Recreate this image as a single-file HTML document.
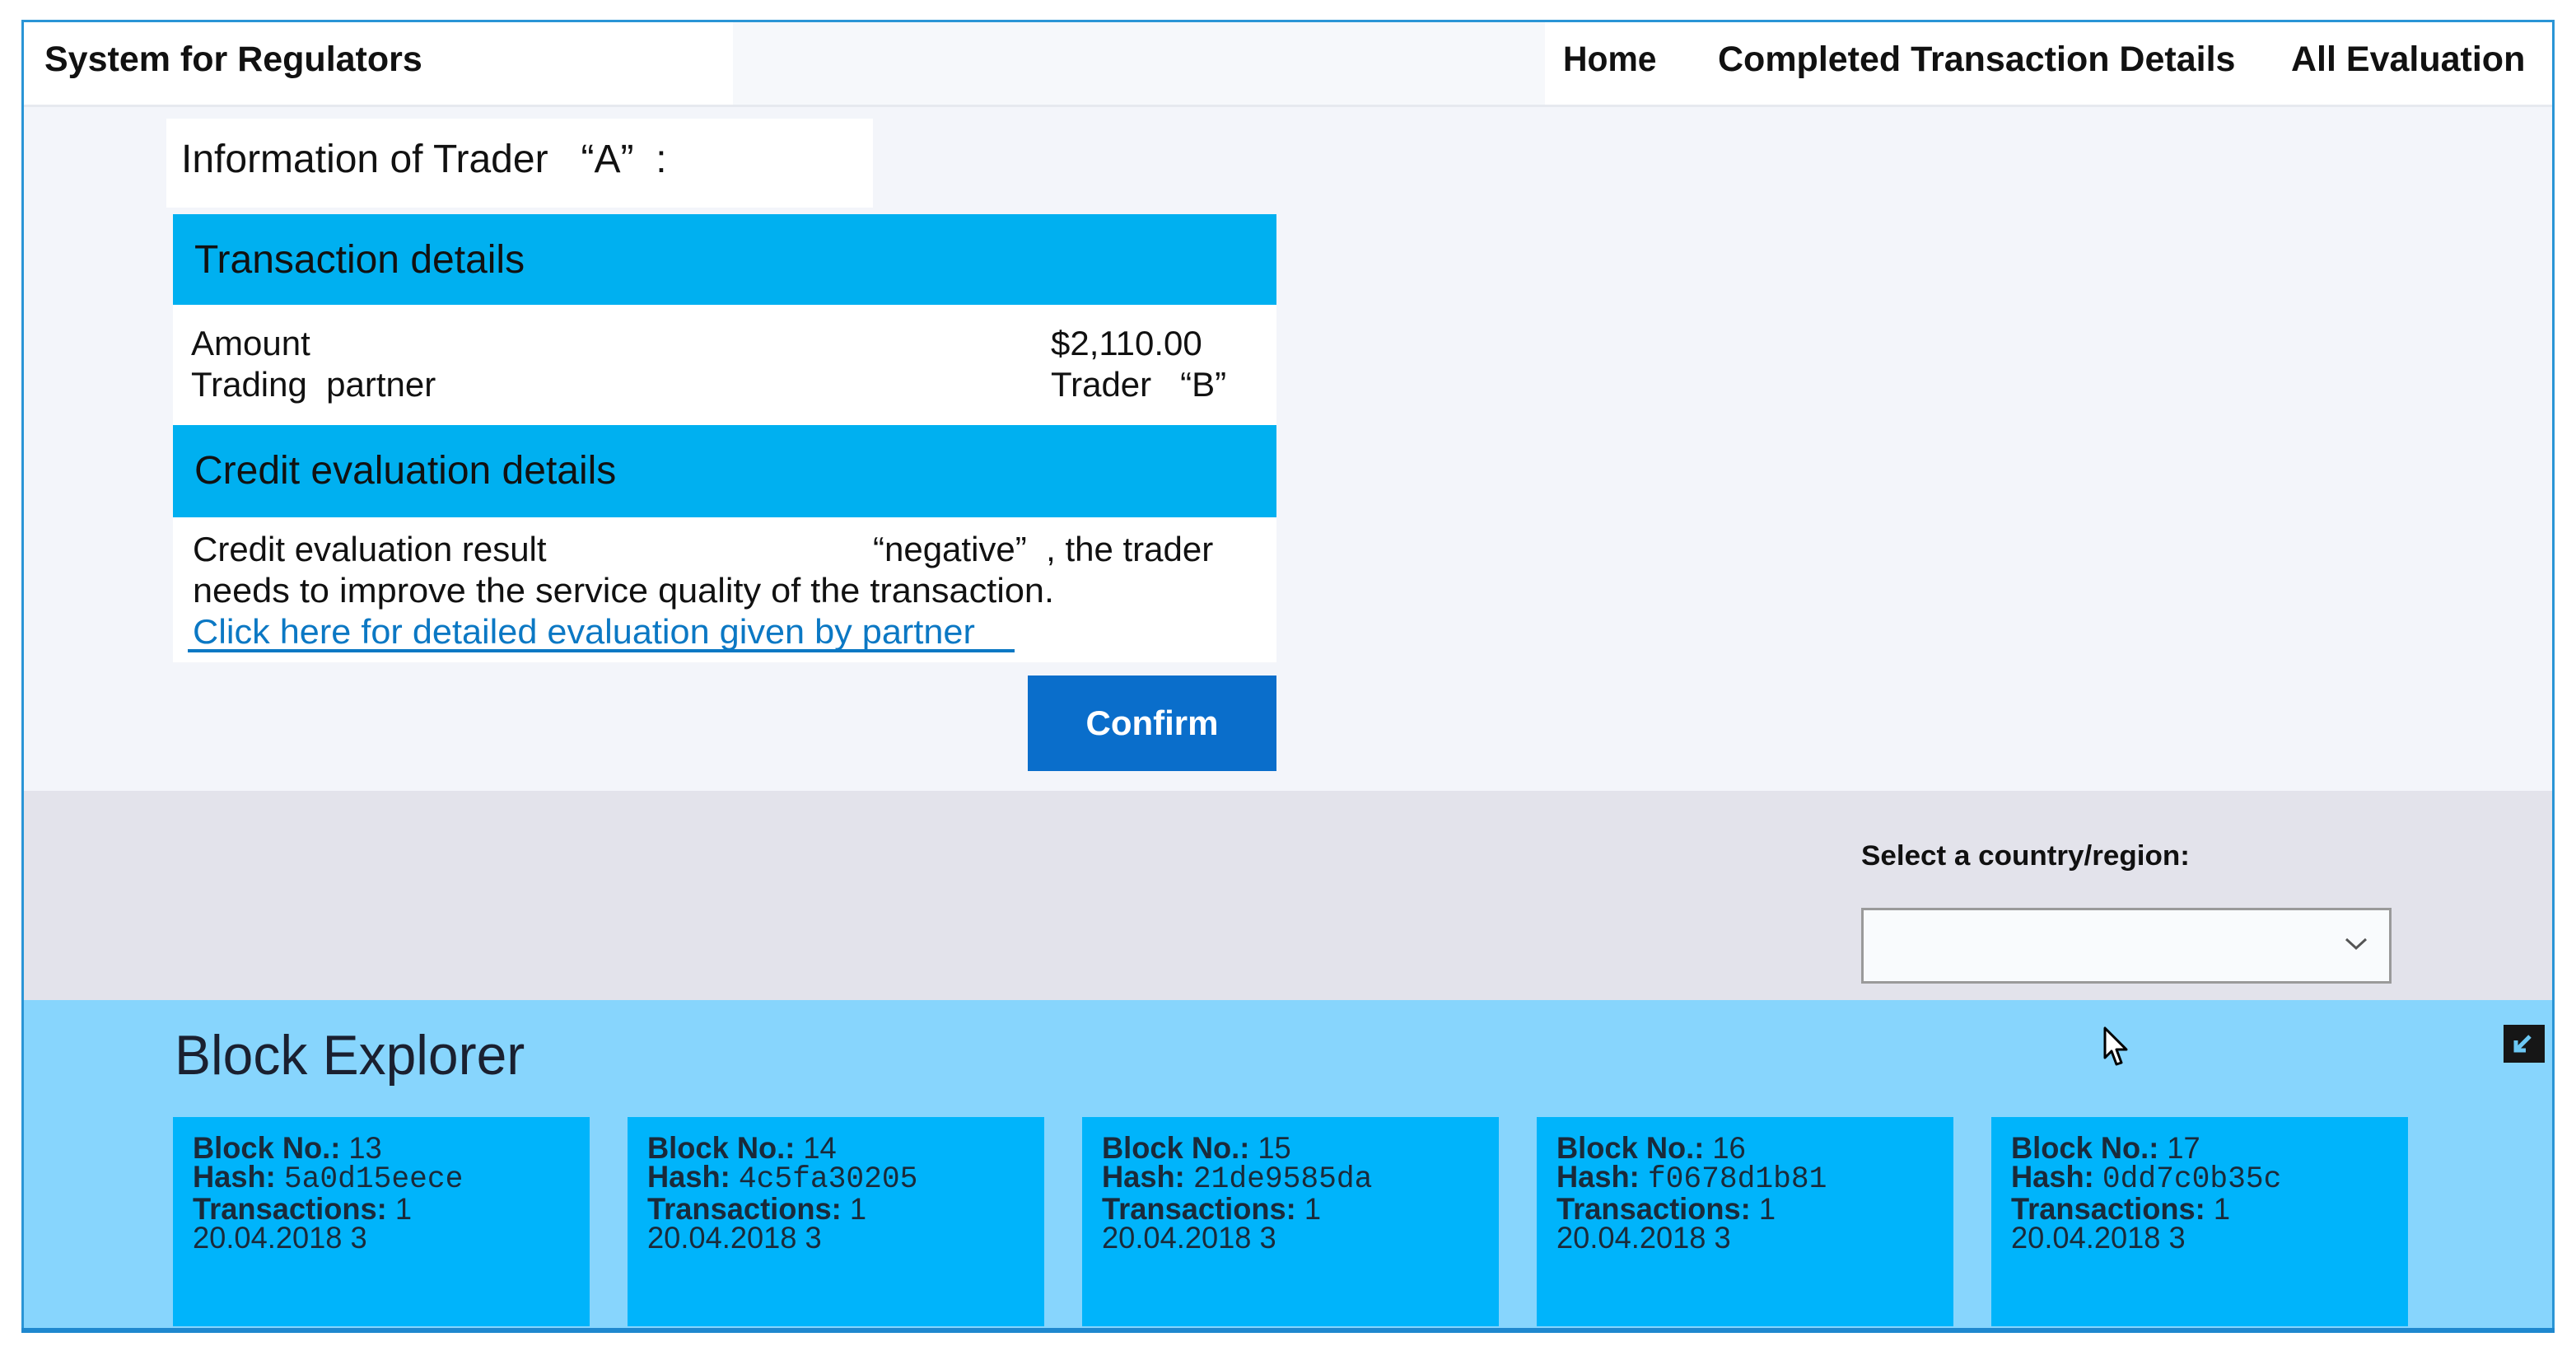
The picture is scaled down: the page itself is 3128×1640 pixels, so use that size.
<!DOCTYPE html>
<html><head><meta charset="utf-8"><style>
*{margin:0;padding:0;box-sizing:border-box}
body{width:3128px;height:1640px;background:#fff;position:relative;overflow:hidden;font-family:"Liberation Sans",sans-serif;color:#111}
.a{position:absolute}
.s{display:inline-block;transform-origin:0 0;white-space:nowrap}
.b{font-weight:bold}
.card{position:absolute;top:1356px;width:506px;height:254px;background:#00b4fb}
.card .t{position:absolute;left:24px;top:20px;font-size:37px;line-height:35px;color:#1a2a3a;transform:scaleX(.98);transform-origin:0 0;white-space:nowrap}
.mono{font-family:"Liberation Mono",monospace;font-weight:normal}
</style></head><body>
<div class="a" style="left:26px;top:24px;width:3076px;height:1594px;border:3px solid #2a95d6;background:#f3f5fa"></div>
<!-- header -->
<div class="a" style="left:29px;top:27px;width:3070px;height:101px;background:#fff"></div>
<div class="a" style="left:890px;top:27px;width:986px;height:101px;background:#f6f8fb"></div>
<div class="a" style="left:29px;top:127px;width:3070px;height:3px;background:#e6e9ef"></div>
<div class="a b" style="left:54px;top:48px;font-size:43px"><span class="s">System for Regulators</span></div>
<div class="a b" style="left:1898px;top:48px;font-size:43px"><span class="s" style="transform:scaleX(.95)">Home</span></div>
<div class="a b" style="left:2086px;top:48px;font-size:43px"><span class="s">Completed Transaction Details</span></div>
<div class="a b" style="left:2782px;top:48px;font-size:43px"><span class="s">All Evaluation</span></div>
<!-- info -->
<div class="a" style="left:202px;top:144px;width:858px;height:108px;background:#fff"></div>
<div class="a" style="left:220px;top:166px;font-size:48px"><span class="s">Information of Trader &nbsp;&nbsp;“A” &nbsp;:</span></div>
<div class="a" style="left:210px;top:260px;width:1340px;height:110px;background:#00b0f0"></div>
<div class="a" style="left:236px;top:288px;font-size:48px"><span class="s">Transaction details</span></div>
<div class="a" style="left:210px;top:370px;width:1340px;height:146px;background:#fff"></div>
<div class="a" style="left:232px;top:392px;font-size:42px;line-height:50px"><span class="s">Amount<br>Trading &nbsp;partner</span></div>
<div class="a" style="left:1276px;top:392px;font-size:42px;line-height:50px"><span class="s">$2,110.00<br>Trader &nbsp;&nbsp;“B”</span></div>
<div class="a" style="left:210px;top:516px;width:1340px;height:112px;background:#00b0f0"></div>
<div class="a" style="left:236px;top:544px;font-size:48px"><span class="s">Credit evaluation details</span></div>
<div class="a" style="left:210px;top:628px;width:1340px;height:176px;background:#fff"></div>
<div class="a" style="left:234px;top:642px;font-size:42px;line-height:50px"><span class="s">Credit evaluation result</span></div>
<div class="a" style="left:1060px;top:642px;font-size:42px;line-height:50px"><span class="s">“negative” &nbsp;, the trader</span></div>
<div class="a" style="left:234px;top:692px;font-size:42px;line-height:50px"><span class="s" style="transform:scaleX(1.03)">needs to improve the service quality of the transaction.</span></div>
<div class="a" style="left:234px;top:742px;font-size:42px;line-height:50px;color:#0b78c4"><span class="s" style="transform:scaleX(1.03)">Click here for detailed evaluation given by partner</span></div>
<div class="a" style="left:228px;top:788px;width:1004px;height:4px;background:#0b78c4"></div>
<div class="a b" style="left:1248px;top:820px;width:302px;height:116px;background:#0a6ecb;color:#fff;font-size:42px;line-height:116px;text-align:center"><span class="s" style="transform-origin:50% 0">Confirm</span></div>
<!-- gray band -->
<div class="a" style="left:29px;top:960px;width:3070px;height:254px;background:#e3e3eb"></div>
<div class="a b" style="left:2260px;top:1020px;font-size:34px"><span class="s" style="transform:scaleX(1.03)">Select a country/region:</span></div>
<div class="a" style="left:2260px;top:1102px;width:644px;height:92px;background:#f9fbfd;border:3px solid #9a9a9a"></div>
<svg class="a" style="left:2846px;top:1136px" width="30" height="20" viewBox="0 0 30 20"><path d="M3 4 L15 15 L27 4" fill="none" stroke="#555" stroke-width="3"/></svg>
<!-- block explorer -->
<div class="a" style="left:29px;top:1214px;width:3070px;height:402px;background:#87d5fd"></div>
<div class="a" style="left:212px;top:1242px;font-size:68px;color:#1a2030"><span class="s" style="transform:scaleX(.97)">Block Explorer</span></div>
<div class="a" style="left:3040px;top:1244px;width:50px;height:46px;background:#161616"></div>
<svg class="a" style="left:3046px;top:1250px" width="36" height="34" viewBox="0 0 36 34"><path d="M26 8 L10 24 M9 13 V25 H21" fill="none" stroke="#6cc8f4" stroke-width="5"/></svg>
<svg class="a" style="left:2554px;top:1246px" width="34" height="54" viewBox="0 0 17 27"><path d="M1 1 L1 19 L5 15 L8 23 L11 22 L8 14 L14 14 Z" fill="#fff" stroke="#000" stroke-width="1.5" stroke-linejoin="round"/></svg>
<div class="card" style="left:210px"><div class="t"><b>Block No.:</b> 13<br><b>Hash:</b> <span class="mono">5a0d15eece</span><br><b>Transactions:</b> 1<br>20.04.2018 3</div></div>
<div class="card" style="left:762px"><div class="t"><b>Block No.:</b> 14<br><b>Hash:</b> <span class="mono">4c5fa30205</span><br><b>Transactions:</b> 1<br>20.04.2018 3</div></div>
<div class="card" style="left:1314px"><div class="t"><b>Block No.:</b> 15<br><b>Hash:</b> <span class="mono">21de9585da</span><br><b>Transactions:</b> 1<br>20.04.2018 3</div></div>
<div class="card" style="left:1866px"><div class="t"><b>Block No.:</b> 16<br><b>Hash:</b> <span class="mono">f0678d1b81</span><br><b>Transactions:</b> 1<br>20.04.2018 3</div></div>
<div class="card" style="left:2418px"><div class="t"><b>Block No.:</b> 17<br><b>Hash:</b> <span class="mono">0dd7c0b35c</span><br><b>Transactions:</b> 1<br>20.04.2018 3</div></div>
<div class="a" style="left:26px;top:1612px;width:3076px;height:6px;background:#1e88cf"></div>
</body></html>
